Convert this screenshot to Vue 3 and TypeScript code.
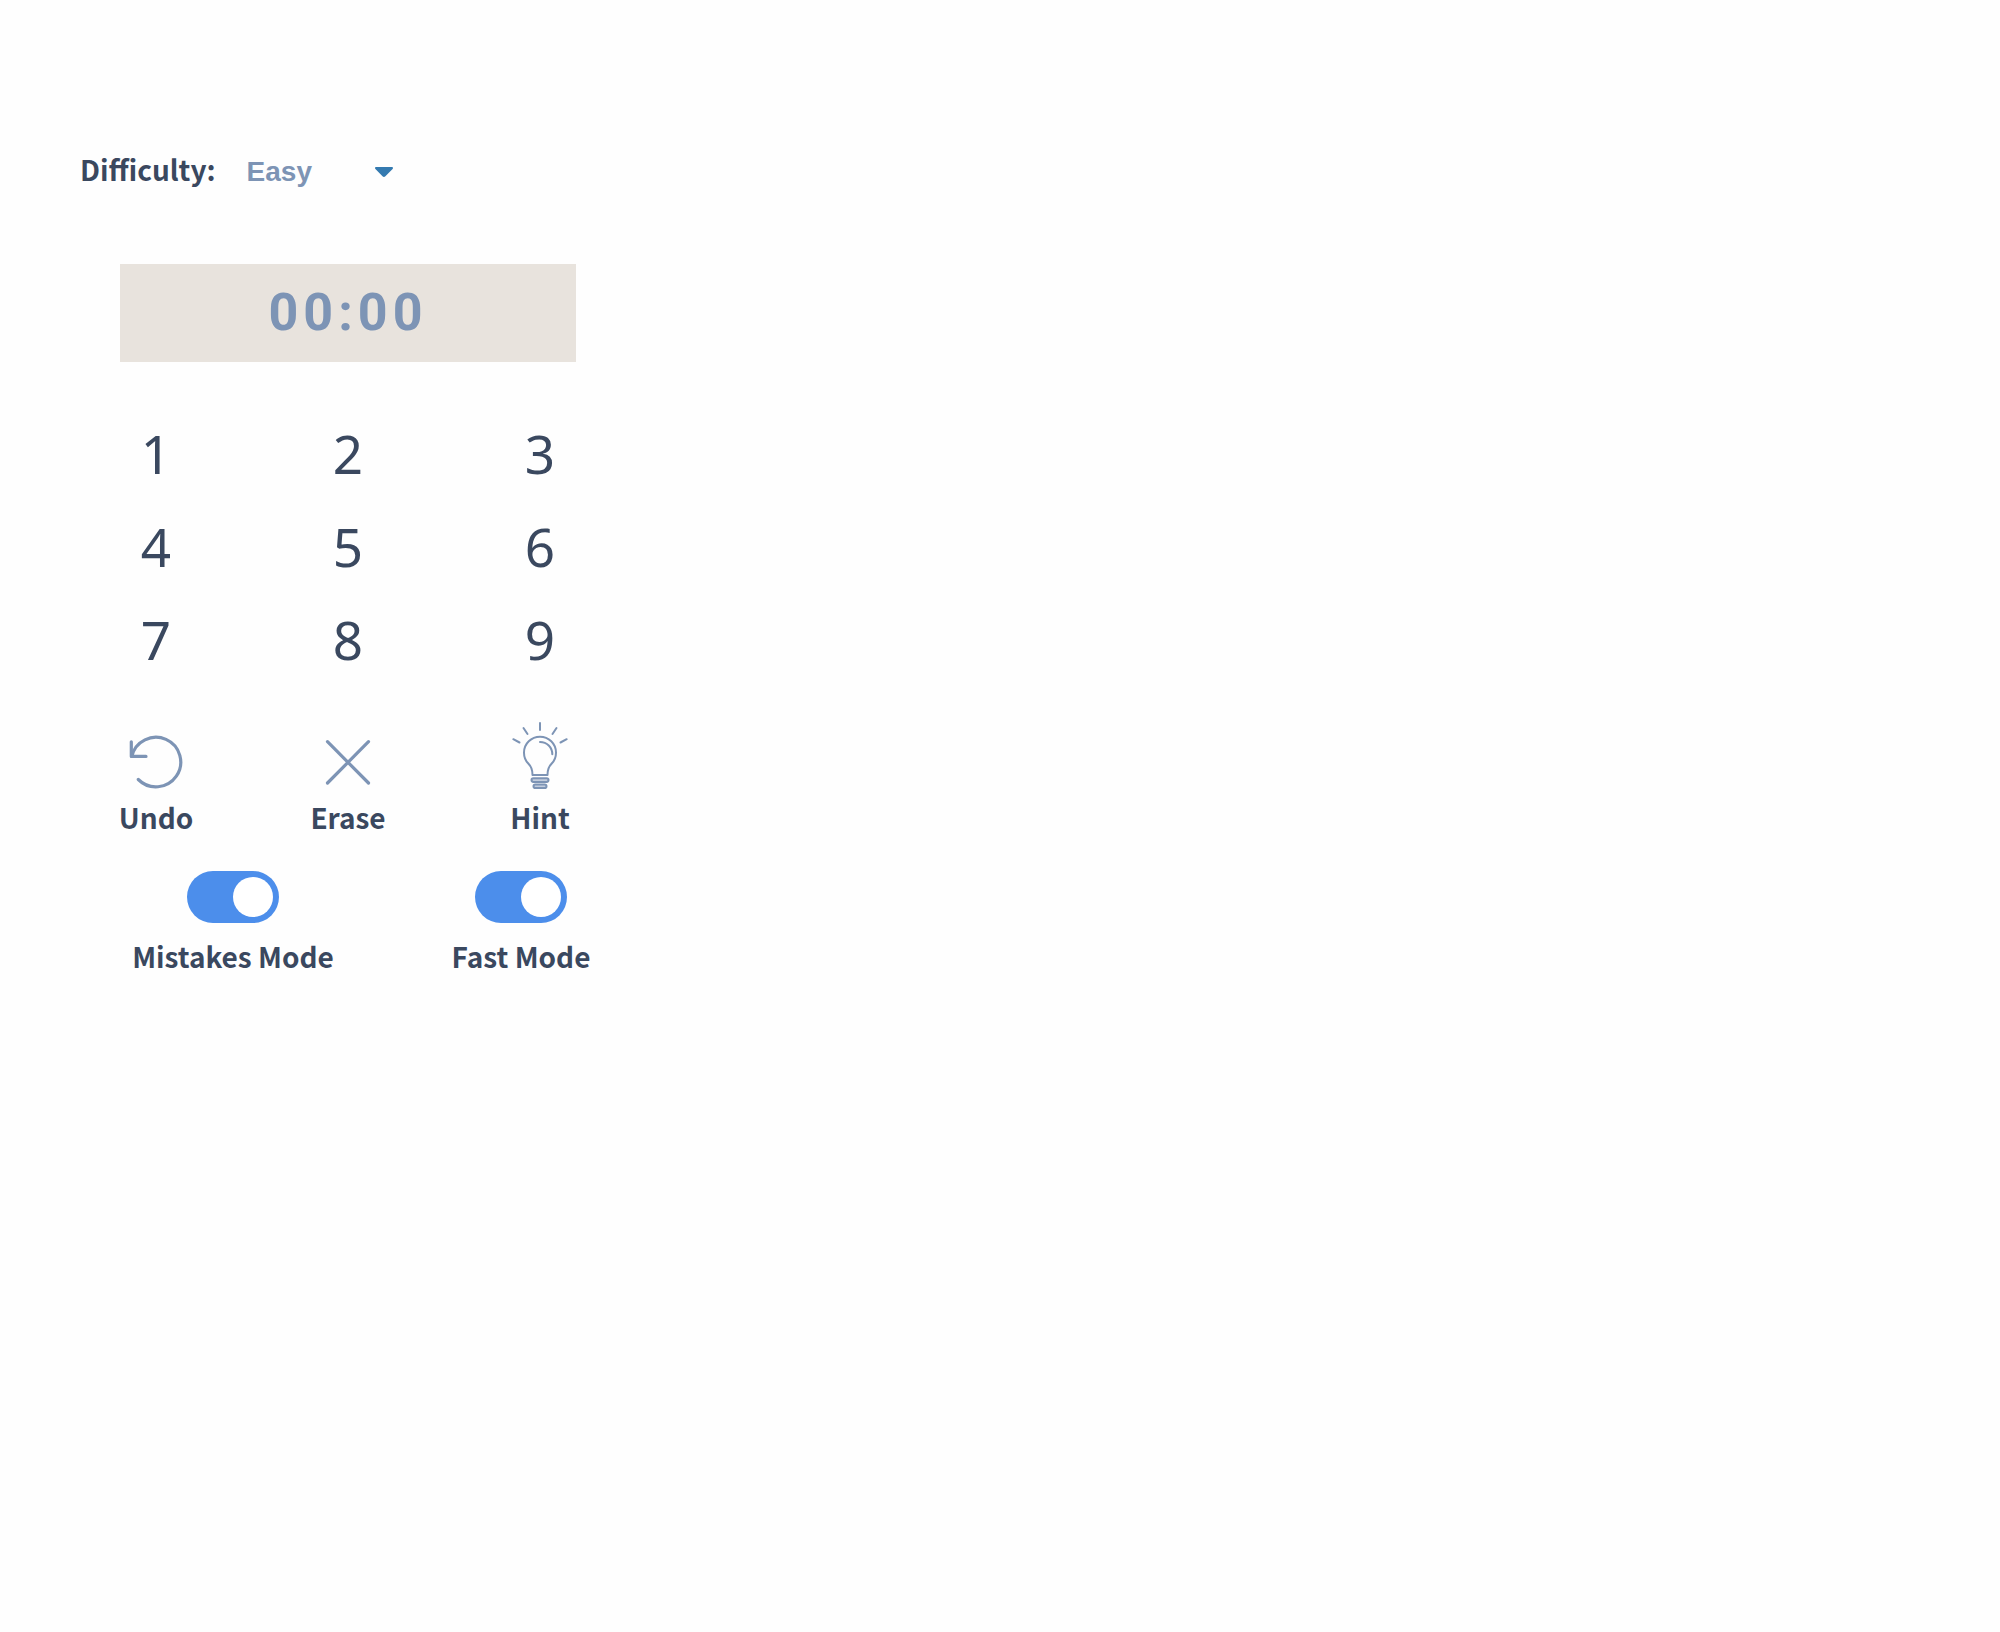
<script setup lang="ts">
import { ref } from 'vue'

const difficulties = ['Easy', 'Medium', 'Hard', 'Expert']
const digits = [1, 2, 3, 4, 5, 6, 7, 8, 9]

const difficulty = ref('Easy')
const elapsed = ref('00:00')
const mistakesMode = ref(true)
const fastMode = ref(true)
</script>

<template>
  <main class="panel">
    <div class="difficulty">
      <label class="label" for="difficulty">Difficulty:</label>
      <div class="select-wrap">
        <select id="difficulty" v-model="difficulty">
          <option v-for="level in difficulties" :key="level">{{ level }}</option>
        </select>
        <svg class="caret" viewBox="0 0 18 10" aria-hidden="true">
          <path d="M1.2 0h15.6c1.1 0 1.6 1.2.8 2L10.4 9.2c-.9.9-2 .9-2.9 0L.4 2C-.4 1.2.1 0 1.2 0z" />
        </svg>
      </div>
    </div>

    <div class="timer" role="timer">{{ elapsed }}</div>

    <div class="keypad">
      <button v-for="digit in digits" :key="digit" type="button" class="digit">{{ digit }}</button>
    </div>

    <div class="actions">
      <button type="button" class="action label">
        <svg viewBox="0 0 60 72" aria-hidden="true">
          <g class="thick">
            <path d="M12.300 59.500A24.800 24.800 0 1 0 5.800 36.300" />
            <path d="M5.300 21.800v14.600H20" />
          </g>
        </svg>
        <span>Undo</span>
      </button>
      <button type="button" class="action label">
        <svg viewBox="0 0 60 72" aria-hidden="true">
          <path class="thick" d="M9.500 21.700l41 41.300M50.500 21.700l-41 41.300" />
        </svg>
        <span>Erase</span>
      </button>
      <button type="button" class="action label">
        <svg viewBox="0 0 60 72" aria-hidden="true">
          <g class="thin">
            <path d="M30 3v7M13.500 8l4 6M46.500 8l-4 6M3.300 19.200l6.200 3.300M56.700 19.200l-6.200 3.300" />
            <path d="M22.500 55c0-5.500-1-8.200-4-11.200a16 16 0 1 1 23 0c-3 3-4 5.700-4 11.200z" />
            <path d="M30 22c7 0 12.300 5.300 12.300 12.300" />
            <rect class="base" x="21.500" y="58.300" width="17" height="3.600" rx="1.800" />
            <rect class="base" x="23.500" y="64.500" width="13" height="3.600" rx="1.800" />
          </g>
        </svg>
        <span>Hint</span>
      </button>
    </div>

    <div class="modes">
      <label class="mode label">
        <input v-model="mistakesMode" type="checkbox" role="switch" />
        <span>Mistakes Mode</span>
      </label>
      <label class="mode label">
        <input v-model="fastMode" type="checkbox" role="switch" />
        <span>Fast Mode</span>
      </label>
    </div>
  </main>
</template>

<style>
body {
  margin: 0;
  background: #fefefe;
}
</style>

<style scoped>
.panel {
  box-sizing: border-box;
  max-width: 696px;
  padding: 151px 60px 60px;
  color: #3a485f;
}

.label {
  font-family: "Noto Sans CJK SC", "Noto Sans", sans-serif;
  font-size: 28px;
  font-weight: 600;
  line-height: 36px;
}

button {
  padding: 0;
  border: 0;
  background: none;
  color: inherit;
  cursor: pointer;
}

.difficulty {
  display: flex;
  align-items: baseline;
  gap: 31px;
  height: 40px;
  padding-left: 20px;
}

.select-wrap {
  position: relative;
}

select {
  width: 148px;
  height: 40px;
  padding: 0;
  border: 0;
  appearance: none;
  background: none;
  color: #7d94b5;
  font: bold 28px "Liberation Sans", Arial, sans-serif;
}

.caret {
  position: absolute;
  top: 15px;
  right: 2px;
  width: 18px;
  height: 10px;
  fill: #347ab0;
  pointer-events: none;
}

.timer {
  margin: 73px 60px 45px;
  background: #e8e3dd;
  color: #7d94b5;
  font-family: Roboto, sans-serif;
  font-size: 52px;
  font-weight: 700;
  line-height: 98px;
  letter-spacing: 5px;
  text-align: center;
}

.keypad,
.actions {
  display: grid;
  grid-template-columns: repeat(3, 1fr);
}

.digit {
  height: 93px;
  font-family: "Noto Sans", "Open Sans", sans-serif;
  font-size: 53px;
  font-weight: 450;
  line-height: 93px;
}

.action {
  display: flex;
  flex-direction: column;
  align-items: center;
  gap: 7px;
  margin-top: 34px;
}

.action svg {
  width: 60px;
  height: 72px;
  fill: none;
  stroke: #7d94b5;
  stroke-linecap: round;
  stroke-linejoin: round;
}

.thick {
  stroke-width: 3.2;
}

.thin {
  stroke-width: 2;
}

.base {
  fill: #c3cddd;
}

.modes {
  display: grid;
  grid-template-columns: repeat(2, 1fr);
  margin: 36px -29px 0 29px;
}

.mode {
  display: flex;
  flex-direction: column;
  align-items: center;
  gap: 15px;
}

.mode input {
  display: flex;
  align-items: center;
  box-sizing: border-box;
  width: 92px;
  height: 52px;
  margin: 0;
  padding: 6px;
  border-radius: 26px;
  appearance: none;
  background: #b8c2d0;
  cursor: pointer;
}

.mode input::before {
  content: "";
  width: 40px;
  height: 40px;
  border-radius: 50%;
  background: #fff;
}

.mode input:checked {
  justify-content: flex-end;
  background: #4c8eeb;
}
</style>
